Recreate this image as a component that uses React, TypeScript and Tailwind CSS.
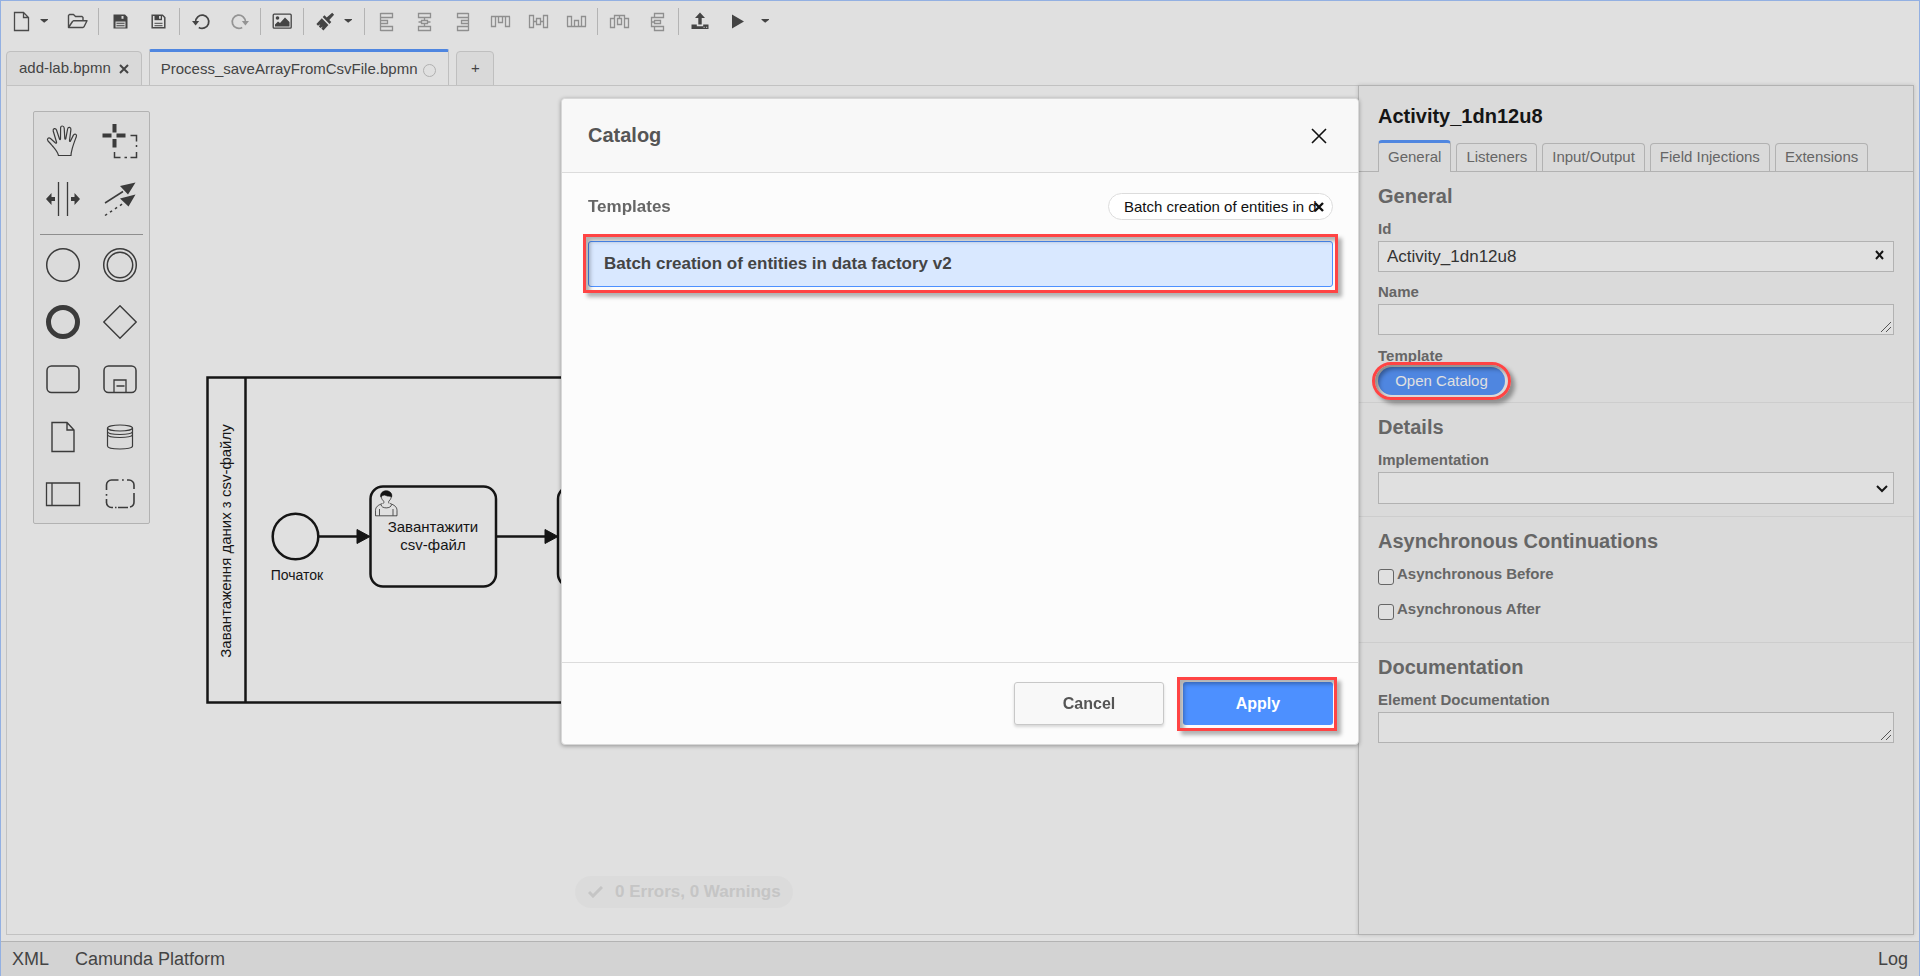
import { useState } from "react";
import type { ReactNode } from "react";

const panelTabs = ["General", "Listeners", "Input/Output", "Field Injections", "Extensions"];

export default function App() {
  return (
    <div className="min-h-screen flex flex-col border-x border-t border-[#93b0e2] bg-[#e0e0e0] font-['Liberation_Sans',Arial,sans-serif] text-[15px] text-[#444]">
      <Toolbar />
      <FileTabs />
      <main className="flex flex-1 mx-[5px] mb-1.5">
        <Canvas />
        <PropertiesPanel />
      </main>
      <footer className="flex items-center h-[35px] border-t border-[#b3b3b3] bg-[#d3d3d3] px-[11px] text-lg">
        <button className="mr-[26px]">XML</button>
        <button>Camunda Platform</button>
        <button className="ml-auto">Log</button>
      </footer>
      <CatalogDialog />
    </div>
  );
}

/* ---------- toolbar ---------- */

function Toolbar() {
  return (
    <header className="flex items-center h-10 pl-px">
      <Tool label="New file">
        <path d="M3.5 1.5h9l5 5v13h-14v-18h1M12.5 1.5v5h5" stroke="#4a4a4a" strokeWidth="1.3" />
      </Tool>
      <Caret label="New file options" />
      <Tool label="Open file">
        <path
          d="M1.5 16.5V4.5l1-1h4l2 2h6.5l1 1v2.5M1.5 16.5l4-6 1-.8H20l-3 6-1 .8z"
          stroke="#4a4a4a"
          strokeWidth="1.4"
          strokeLinejoin="round"
        />
      </Tool>
      <Separator />
      <Tool label="Save">
        <path d="M3.5 3.5H15l2.500 2.500v11.500h-14z" fill="#444" />
        <path d="M11.500 5h2v2.800h-2z" fill="#d8d8d8" />
        <path d="M5.500 10.500h10v6h-10z" fill="#d0d0d0" />
        <path d="M6.500 12.300h8M6.500 14.700h8" stroke="#666" strokeWidth="1.200" />
      </Tool>
      <Tool label="Save as">
        <path d="M4.200 4.200h10.300l2.300 2.300v10.300H4.200z" stroke="#4a4a4a" strokeWidth="1.500" />
        <path d="M6.500 4.200h7.500v5H6.500z" fill="#444" />
        <path d="M11 5h1.800v2.800H11z" fill="#d8d8d8" />
        <path d="M6.500 12.300h8M6.500 14.700h8" stroke="#666" strokeWidth="1.200" />
      </Tool>
      <Separator />
      <Tool label="Undo">
        <path d="M4.6 11a6.6 6.6 0 1 1 3.2 5.4" stroke="#444" strokeWidth="1.8" />
        <path d="M1 10h7.2l-3.6 4.4z" fill="#444" />
      </Tool>
      <Tool label="Redo">
        <path d="M16.4 11a6.6 6.6 0 1 0-3.2 5.4" stroke="#949494" strokeWidth="1.8" />
        <path d="M20 10h-7.2l3.6 4.4z" fill="#949494" />
      </Tool>
      <Separator />
      <Tool label="Export as image">
        <rect x="1.2" y="3.2" width="18" height="14" rx="1" stroke="#444" strokeWidth="1.3" />
        <circle cx="5.5" cy="7" r="1.8" fill="#444" />
        <path d="M3 15.5v-2l3-3 2 1.5 5-5.5 4.5 4.5v4.5z" fill="#444" />
      </Tool>
      <Separator />
      <Tool label="Set color">
        <path
          d="M17.200 1.800l1.900 1.900-4.800 5.400 2 2-1.800 1.800-6.800-6.800 1.800-1.800 2.200 2.200zM6.800 7.300l6.600 6.600-5 5.500-2-1.900 1.500-1.900-2.500 1.300-1.500-1.500 1.300-2.100-2.200 1.400-1.600-1.800z"
          fill="#444"
        />
      </Tool>
      <Caret label="Color options" />
      <Separator />
      <Tool label="Align left">
        <Outline d="M4.500 2v18M4.500 2.500h12v4h-12M4.500 9.500h7v3h-7M4.500 15.500h12v4h-12" />
      </Tool>
      <Tool label="Align center">
        <Outline d="M4.500 2.500h12v4h-12zM7.500 9.500h6v3h-6zM4.500 15.500h12v4h-12zM10.500 6.500v3M10.500 12.500v3M4.500 11h3M13.500 11h3" />
      </Tool>
      <Tool label="Align right">
        <Outline d="M16.500 2v18M16.500 2.500h-11v4h11M16.500 9.500h-7v3h7M16.500 15.500h-11v4h11" />
      </Tool>
      <Tool label="Align top">
        <Outline d="M1 5.500h19M1.500 5.500v10h4v-10M8.500 5.500v6h4v-6M15.500 5.500v10h4v-10" />
      </Tool>
      <Tool label="Align middle">
        <Outline d="M1.500 4.500h4v12h-4zM8.500 7.500h4v6h-4zM15.500 4.500h4v12h-4zM5.500 10.500h3M12.500 10.500h3" />
      </Tool>
      <Tool label="Align bottom">
        <Outline d="M1 15.500h19M1.500 15.500v-10h4v10M8.500 15.500v-6h4v6M15.500 15.500v-10h4v10" />
      </Tool>
      <Separator />
      <Tool label="Distribute horizontally">
        <Outline d="M1.500 7.500h4v9h-4zM15.500 7.500h4v9h-4zM8.500 7.500h4v6h-4zM5.500 13.500v-9h10v9M10.500 4.500v3" />
      </Tool>
      <Tool label="Distribute vertically">
        <Outline d="M7.500 2.500h9v4h-9zM7.500 15.500h9v4h-9zM7.500 9.500h6v3h-6zM7.500 6.500h-3v9h3M4.500 11h3" />
      </Tool>
      <Separator />
      <Tool label="Deploy">
        <path d="M10 1.500l5 5.500h-3.300v6.500H8.300V7H5z" fill="#444" />
        <path d="M1.500 13.500h5.300v1.800h6.400v-1.800h5.300v4.500h-17z" fill="#444" />
        <path d="M13.500 16.300h1.200M16 16.300h1.200" stroke="#d0d0d0" />
      </Tool>
      <Tool label="Run">
        <path d="M4 3.500l12 7-12 7z" fill="#444" />
      </Tool>
      <span className="w-1" />
      <Caret label="Run options" />
    </header>
  );
}

function Tool({ label, children }: { label: string; children: ReactNode }) {
  return (
    <button aria-label={label} className="grid place-items-center w-[38px] h-[30px]">
      <svg width="21" height="21" viewBox="0 0 21 21" fill="none">
        {children}
      </svg>
    </button>
  );
}

function Outline({ d }: { d: string }) {
  return <path d={d} stroke="#8f8f8f" strokeWidth="1.300" />;
}

function Caret({ label }: { label: string }) {
  return (
    <button aria-label={label} className="flex items-center w-[18px] h-[30px]">
      <svg width="9" height="5" viewBox="0 0 9 5">
        <path d="M.5 0h7.500v.8L4.200 3.800 .5.8z" fill="#444" />
      </svg>
    </button>
  );
}

function Separator() {
  return <span className="w-px h-[27px] mx-0.5 bg-[#b4b4b4]" />;
}

/* ---------- open files ---------- */

function FileTabs() {
  return (
    <nav className="flex items-end h-[45px] px-[5px] -mb-px relative">
      <div className="flex items-center h-[35px] pl-3 pr-3 border border-[#bfbfbf] rounded-t-sm bg-[#d9d9d9]">
        <button>add-lab.bpmn</button>
        <button aria-label="Close add-lab.bpmn" className="ml-2">
          <svg width="10" height="10" viewBox="0 0 10 10" stroke="#444" strokeWidth="2">
            <path d="M1 1l8 8M9 1L1 9" />
          </svg>
        </button>
      </div>
      <div className="flex items-center h-[37px] ml-[7px] pl-[11px] pr-3 border-x border-t-3 border-x-[#bfbfbf] border-t-[#4f86e0] rounded-t-xs bg-[#e0e0e0]">
        <button>Process_saveArrayFromCsvFile.bpmn</button>
        <span className="ml-1.5 mt-0.5 size-[13px] rounded-full border border-[#b0b0b0]" />
      </div>
      <button
        aria-label="New diagram"
        className="h-[35px] w-[38px] ml-[7px] border border-[#bfbfbf] rounded-t-sm bg-[#d9d9d9] text-[15px]"
      >
        +
      </button>
    </nav>
  );
}

/* ---------- diagram ---------- */

function Canvas() {
  return (
    <section className="relative flex-1 min-h-[600px] overflow-hidden border-l border-y border-[#c2c2c2]">
      <svg className="absolute inset-0 w-full h-full" fill="none" stroke="#151515" strokeWidth="2.500">
        <rect x="200.500" y="291.500" width="1100" height="325" />
        <path d="M238.500 291.500v325" />
        <circle cx="288.500" cy="450.500" r="22.800" />
        <path d="M311.500 450.500H352M489 450.500h50" />
        <path d="M350 443.500l13 7-13 7zM538 443.500l13 7-13 7z" fill="#151515" strokeWidth="1" strokeLinejoin="round" />
        <rect x="363.500" y="400.500" width="125.500" height="100" rx="12.500" />
        <rect x="551" y="400.500" width="125.500" height="100" rx="12.500" />
        <g transform="translate(368 404)" strokeWidth=".7">
          <path d="M7.500 13.500C3 15 .500 17 .500 20.500v5.300h21.500v-5.300c0-3.500-2.500-5.500-7-7M4.500 19v6.500M18 19v6.500M6 14.500c0 4.500 10.500 4.500 10.500 0" />
          <path d="M8.500 13.500c.5-1 .5-2 0-2.500C5 8 5 1.500 11.200 1.500S17.500 8 14 11c-.5.500-.5 1.500 0 2.500" />
          <path d="M5.800 7C5 3 8 .8 11.200.8S17.500 3 16.600 7C15 5.500 13 6.800 11 5.500 9 4.500 7 5.500 5.800 7z" fill="#151515" />
        </g>
        <g fill="#151515" stroke="none" textAnchor="middle" fontSize="15">
          <text x="426" y="446">Завантажити</text>
          <text x="426" y="464">csv-файл</text>
          <text x="290" y="494" fontSize="14">Початок</text>
          <text transform="translate(224 455) rotate(-90)">Завантаження даних з csv-файлу</text>
        </g>
      </svg>
      <Palette />
      <button className="absolute left-[568px] bottom-[26px] flex items-center h-8 pl-[13px] pr-3 rounded-full bg-[#dbdbdb] text-[#c5c5c5] text-[17px] font-bold">
        <svg width="15" height="12" viewBox="0 0 15 12" fill="none" stroke="#c5c5c5" strokeWidth="3" className="mr-3">
          <path d="M1 6l4 4 9-9" />
        </svg>
        0 Errors, 0 Warnings
      </button>
    </section>
  );
}

function Palette() {
  return (
    <div className="absolute left-[26px] top-[25px] w-[117px] border border-[#b2b2b2] rounded-xs bg-[#dbdbdb]">
      <div className="grid grid-cols-2 auto-rows-fr h-[116px]">
        <Entry label="Hand tool">
          <path
            d="M13.500 33.500c-1-4-3.500-6.500-6-9.500-1.500-2-3.500-4-4.500-5-1.500-2 .5-4 2.500-2.500l5 4.500c.8.600 1.300 0 1-1L8.200 9c-.5-2.600 2.400-3.300 3.300-1l3 9c.3.800 1 .8 1-.2L15.600 6c0-2.700 3.300-2.700 3.600 0l.6 10.500c.1 1 .8 1 1 .1L22.600 7c.5-2.500 3.600-2 3.300.6l-1.400 11c-.1 1 .6 1.200 1 .3l2.800-5.500c1.300-2.300 4-1 3 1.300-1.300 3.500-2.800 7.300-3.800 11-.7 2.700-1.500 5-1.500 7.800z"
            strokeWidth="1.200"
          />
        </Entry>
        <Entry label="Lasso tool">
          <path d="M.5 13.500h9M14.500 13.500h9M12.500 2v8.500M12.500 17v8.500" strokeWidth="4" />
          <path d="M28.500 13.500h6v6M34.500 23v2M34.500 30v5.500h-6M25 35.500h-2.500M18.500 35.500h-6V30" strokeWidth="1.500" />
        </Entry>
        <Entry label="Space tool">
          <path d="M13.500 2v34M22.500 2v34" strokeWidth="1.300" />
          <path
            d="M1 19l5.500-6v4H10v4H6.500v4zM35 19l-5.500-6v4H26v4h3.500v4z"
            fill="#3b3b3b"
            stroke="none"
          />
        </Entry>
        <Entry label="Connect tool">
          <path d="M3 23l18-11.500" strokeWidth="1.500" />
          <path d="M3 35.500l18-12" strokeWidth="1.500" strokeDasharray="2.500 3.500" />
          <path d="M33.500 2.500L18 6l8 8.500zM33.500 14.500L18 18.500l8.500 8z" fill="#3b3b3b" stroke="none" />
        </Entry>
      </div>
      <hr className="mx-1.5 mt-1.5 mb-px border-[#8e8e8e]" />
      <div className="grid grid-cols-2 auto-rows-fr h-[287px]">
        <Entry label="Start event">
          <circle cx="18" cy="19" r="16.300" strokeWidth="1.500" />
        </Entry>
        <Entry label="Intermediate event">
          <circle cx="18" cy="19" r="16.300" strokeWidth="1.500" />
          <circle cx="18" cy="19" r="12.700" strokeWidth="1.500" />
        </Entry>
        <Entry label="End event">
          <circle cx="18" cy="19" r="14.500" strokeWidth="5" />
        </Entry>
        <Entry label="Gateway">
          <path d="M18 2.800L34.200 19 18 35.200 1.800 19z" strokeWidth="1.400" />
        </Entry>
        <Entry label="Task">
          <rect x="2" y="6" width="32" height="26.500" rx="4.500" strokeWidth="1.500" />
        </Entry>
        <Entry label="Sub process">
          <rect x="2" y="6" width="32" height="26.500" rx="4.500" strokeWidth="1.500" />
          <path d="M12 32V20h12v12M14.500 26h8" strokeWidth="1.300" />
        </Entry>
        <Entry label="Data object">
          <path d="M7 4.500h15l7 7.500v21.500H7zM22 4.500V12h7" strokeWidth="1.400" />
        </Entry>
        <Entry label="Data store">
          <ellipse cx="18" cy="10" rx="12.500" ry="3" strokeWidth="1.200" />
          <path
            d="M5.500 10v18c0 4 25 4 25 0V10M5.500 13.500c0 4 25 4 25 0M5.500 16.500c0 4 25 4 25 0"
            strokeWidth="1.200"
          />
        </Entry>
        <Entry label="Participant">
          <path d="M1.500 8h33v22.500h-33zM7 8v22.500" strokeWidth="1.300" />
        </Entry>
        <Entry label="Group">
          <path
            d="M4.500 15V10a5 5 0 0 1 5-5h7M25 5h2a5 5 0 0 1 5 5v1M32 18v9a5 5 0 0 1-4 5M11 32.500H9.500a5 5 0 0 1-5-5V25M16 32.500h10M32 10v4M4.500 28v-4"
            strokeWidth="1.600"
          />
          <path d="M20 5h1.800M32 16h0M4.500 19v1.800M13 32.500h1.500" strokeWidth="1.600" />
        </Entry>
      </div>
    </div>
  );
}

function Entry({ label, children }: { label: string; children: ReactNode }) {
  return (
    <button aria-label={label} className="grid place-items-center">
      <svg width="36" height="38" viewBox="0 0 36 38" fill="none" stroke="#3b3b3b">
        {children}
      </svg>
    </button>
  );
}

/* ---------- properties ---------- */

function PropertiesPanel() {
  return (
    <aside className="relative w-[556px] shrink-0 border border-[#b2b2b2] bg-[#dadada] text-[#666] shadow-[0_0_4px_rgba(0,0,0,0.15)]">
      <h1 className="pt-[18px] pl-[19px] text-xl leading-6 font-bold text-[#151515]">Activity_1dn12u8</h1>
      <div className="flex items-end h-[44px] pl-[19px] gap-[5px] border-b border-[#b2b2b2]">
        {panelTabs.map((tab, i) => (
          <button
            key={tab}
            className={
              i === 0
                ? "h-[32px] -mb-px px-[9px] border-x border-t-3 border-x-[#b2b2b2] border-t-[#4f86e0] rounded-t-sm bg-[#dadada]"
                : "h-[28px] px-[9px] border border-b-0 border-[#b2b2b2] rounded-t-sm"
            }
          >
            {tab}
          </button>
        ))}
      </div>

      <Group title="General">
        <Label htmlFor="id">Id</Label>
        <div className="relative">
          <input
            id="id"
            defaultValue="Activity_1dn12u8"
            className="block w-full h-[31px] px-2 border border-[#b2b2b2] bg-[#e0e0e0] text-[17px] text-[#333]"
          />
          <button aria-label="Clear id" className="absolute right-2.5 top-[9px]">
            <svg width="9" height="11" viewBox="0 0 9 11" stroke="#151515" strokeWidth="2">
              <path d="M1 1l7 8M8 1L1 9" />
            </svg>
          </button>
        </div>
        <Label htmlFor="name" className="mt-[11px]">
          Name
        </Label>
        <TextArea id="name" />
        <p className="mt-[11px] leading-5 font-bold">Template</p>
        <div className="relative w-[127px] mt-px">
          <button className="block w-full h-7 rounded-full bg-[#4f86e0] text-[#e0e0e0]">Open Catalog</button>
          <span className="pointer-events-none absolute -inset-x-1.5 -inset-y-[5px] rounded-full border-3 border-[#ff4444] shadow-[4px_4px_4px_rgba(0,0,0,0.35),inset_4px_4px_4px_rgba(0,0,0,0.35)]" />
        </div>
      </Group>

      <Group title="Details">
        <Label htmlFor="implementation">Implementation</Label>
        <div className="relative mb-[5px]">
          <select
            id="implementation"
            className="appearance-none block w-full h-8 px-2 border border-[#b2b2b2] bg-[#e0e0e0] text-[17px] text-[#151515]"
          >
            <option></option>
          </select>
          <svg
            className="pointer-events-none absolute right-[6px] top-[13px]"
            width="12"
            height="8"
            viewBox="0 0 12 8"
            fill="none"
            stroke="#151515"
            strokeWidth="2"
          >
            <path d="M1 1l5 5 5-5" />
          </svg>
        </div>
      </Group>

      <Group title="Asynchronous Continuations">
        <Check id="before">Asynchronous Before</Check>
        <Check id="after">Asynchronous After</Check>
      </Group>

      <section className="px-[19px] pt-3">
        <h2 className="mb-3 text-xl leading-6 font-bold">Documentation</h2>
        <Label htmlFor="documentation">Element Documentation</Label>
        <TextArea id="documentation" />
      </section>
    </aside>
  );
}

function Group({ title, children }: { title: string; children: ReactNode }) {
  return (
    <section className="px-[19px] pt-3 pb-[7px] border-b border-[#cdcdcd]">
      <h2 className="mb-3 text-xl leading-6 font-bold">{title}</h2>
      {children}
    </section>
  );
}

function Label({
  htmlFor,
  className = "",
  children,
}: {
  htmlFor: string;
  className?: string;
  children: ReactNode;
}) {
  return (
    <label htmlFor={htmlFor} className={`block pb-[3px] leading-[18px] font-bold ${className}`}>
      {children}
    </label>
  );
}

function TextArea({ id }: { id: string }) {
  return (
    <div className="relative">
      <textarea id={id} className="block w-full h-[31px] resize-none border border-[#b2b2b2] bg-[#e0e0e0]" />
      <svg
        className="pointer-events-none absolute right-[3px] bottom-[3px]"
        width="10"
        height="10"
        viewBox="0 0 10 10"
        stroke="#555"
      >
        <path d="M0 10L10 0M5 10l5-5" />
      </svg>
    </div>
  );
}

function Check({ id, children }: { id: string; children: ReactNode }) {
  return (
    <div className="flex items-start h-[35px]">
      <input
        id={id}
        type="checkbox"
        className="appearance-none size-4 mt-1 mr-[3px] border border-[#666] rounded-[3px] bg-[#e0e0e0] checked:bg-[#4f86e0]"
      />
      <label htmlFor={id} className="leading-[18px] font-bold">
        {children}
      </label>
    </div>
  );
}

/* ---------- catalog ---------- */

function CatalogDialog() {
  const [query, setQuery] = useState("Batch creation of entities in data factory v2");

  return (
    <div className="fixed inset-0 flex items-start justify-center pt-[98px]">
      <div
        role="dialog"
        aria-labelledby="catalog-title"
        className="w-[798px] border border-[#d8d8d8] rounded-sm bg-[#fcfcfc] shadow-[0_1px_4px_rgba(0,0,0,0.35)]"
      >
        <header className="flex items-center justify-between h-[74px] pl-[26px] pr-[25px] border-b border-[#dcdcdc] rounded-t-sm bg-[#f8f8f8]">
          <h2 id="catalog-title" className="pb-0.5 text-xl font-bold text-[#555]">
            Catalog
          </h2>
          <button aria-label="Close" className="mr-1.5">
            <svg width="16" height="16" viewBox="0 0 16 16" stroke="#111" strokeWidth="1.600">
              <path d="M1 1l14 14M15 1L1 15" />
            </svg>
          </button>
        </header>

        <div className="h-[489px] pl-[26px] pr-[25px] pt-5">
          <div className="flex items-center justify-between mb-[21px]">
            <h3 className="text-[17px] font-bold text-[#666]">Templates</h3>
            <div className="relative">
              <input
                aria-label="Search templates"
                value={query}
                onChange={(e) => setQuery(e.target.value)}
                className="block w-[225px] h-[27px] px-[15px] border border-[#dcdcdc] rounded-full bg-white text-[15px] text-[#111]"
              />
              <button aria-label="Clear search" className="absolute right-[9px] top-[9px]" onClick={() => setQuery("")}>
                <svg width="10" height="10" viewBox="0 0 10 10" stroke="#111" strokeWidth="2.400">
                  <path d="M1 1l8 8M9 1L1 9" />
                </svg>
              </button>
            </div>
          </div>
          <div className="relative">
            <button className="block w-full h-[46px] px-[15px] border border-[#4d90ff] rounded-[3px] bg-[#d9e8ff] text-left text-[17px] font-bold text-[#444]">
              Batch creation of entities in data factory v2
            </button>
            <Highlight className="-inset-x-[5px] -top-[7px] -bottom-[6px]" />
          </div>
        </div>

        <footer className="flex justify-end gap-[19px] px-[25px] py-[19px] border-t border-[#dcdcdc] text-[16px] font-bold">
          <button className="w-[150px] h-[43px] border border-[#c8c8c8] rounded-[3px] bg-[#f8f8f8] text-[#555] shadow-[0_2px_3px_rgba(0,0,0,0.15)]">
            Cancel
          </button>
          <div className="relative">
            <button className="w-[150px] h-[43px] rounded-[3px] bg-[#4d90ff] text-white">Apply</button>
            <Highlight className="-left-1.5 -right-1 -top-[5px] -bottom-1.5" />
          </div>
        </footer>
      </div>
    </div>
  );
}

function Highlight({ className }: { className: string }) {
  return (
    <span
      className={`pointer-events-none absolute border-3 border-[#ff4444] shadow-[4px_4px_4px_rgba(0,0,0,0.3),inset_4px_4px_4px_rgba(0,0,0,0.3)] ${className}`}
    />
  );
}
